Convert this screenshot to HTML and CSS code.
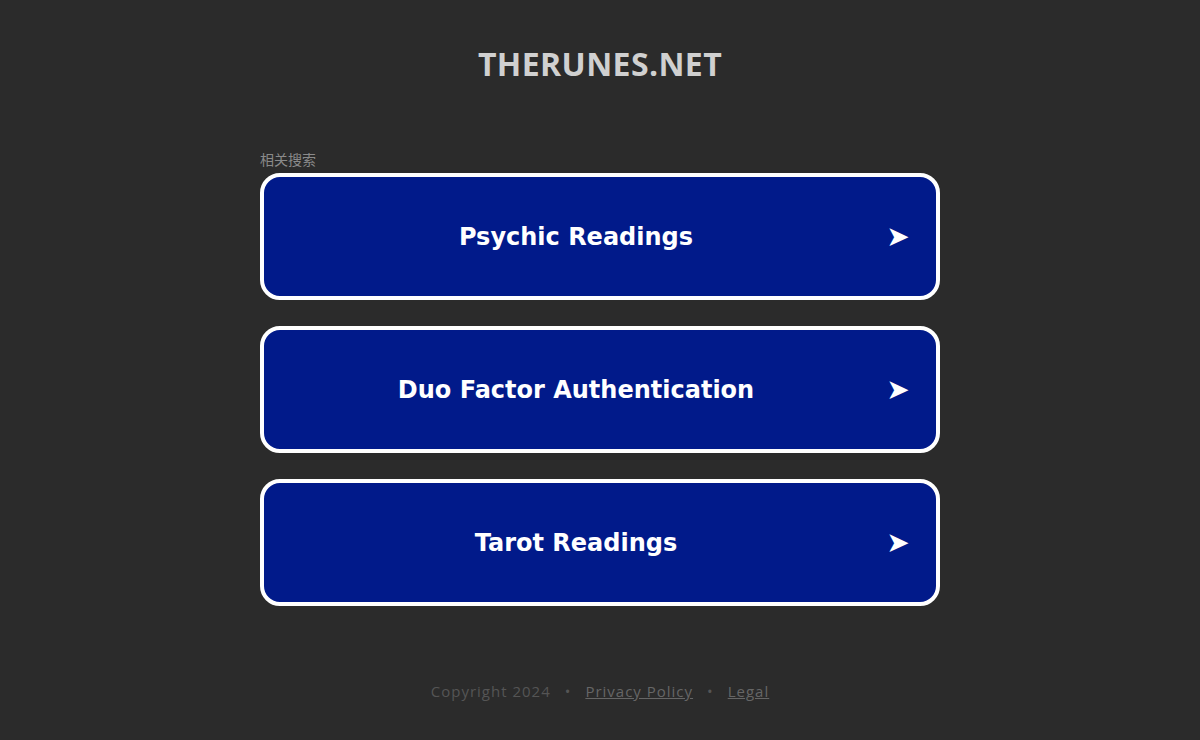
FILE: index.html
```html
<!DOCTYPE html>
<html lang="zh">
<head>
    <meta charset="UTF-8">
    <meta name="viewport" content="width=device-width, initial-scale=1.0">
    <title>therunes.net</title>
    <link rel="stylesheet" href="styles.css">
</head>
<body>
    <div class="page">
        <h1 class="domain">THERUNES.NET</h1>
        <div class="related">
            <div class="related-title">相关搜索</div>
            <a class="link-box" href="#">
                <span class="link-text">Psychic Readings</span>
                <span class="link-arrow">➤</span>
            </a>
            <a class="link-box" href="#">
                <span class="link-text">Duo Factor Authentication</span>
                <span class="link-arrow">➤</span>
            </a>
            <a class="link-box" href="#">
                <span class="link-text">Tarot Readings</span>
                <span class="link-arrow">➤</span>
            </a>
        </div>
        <div class="footer">
            <span>Copyright 2024</span>
            <span class="dot">•</span>
            <a href="#">Privacy Policy</a>
            <span class="dot">•</span>
            <a href="#">Legal</a>
        </div>
    </div>
</body>
</html>
```

FILE: styles.css
```css
body {
    margin: 0;
    background: #2b2b2b;
    font-family: 'Open Sans', 'Noto Sans CJK SC', sans-serif;
}
.page {
    display: flex;
    flex-direction: column;
    align-items: center;
    height: 740px;
}
.domain {
    margin: 44px 0 0;
    font-size: 32px;
    font-weight: 700;
    color: #d0d0d0;
    letter-spacing: 0.4px;
    line-height: 40px;
}
.related {
    width: 680px;
    margin-top: 66px;
    display: flex;
    flex-direction: column;
}
.related-title {
    font-size: 14px;
    color: #8a8a8a;
    line-height: 18px;
    margin-bottom: 5px;
    font-family: 'Noto Sans CJK SC', sans-serif;
}
.link-box {
    display: flex;
    align-items: center;
    height: 119px;
    margin-bottom: 26px;
    background: #011a8a;
    border: 4px solid #fff;
    border-radius: 20px;
    text-decoration: none;
    color: #fff;
}
.link-text {
    flex: 1;
    text-align: center;
    padding-left: 20px;
    font-family: 'DejaVu Sans', Verdana, sans-serif;
    font-weight: 700;
    font-size: 24px;
}
.link-arrow {
    width: 60px;
    padding-right: 8px;
    text-align: center;
    font-family: 'DejaVu Sans', sans-serif;
    font-size: 28px;
    line-height: 30px;
}
.footer {
    margin-top: 49px;
    font-size: 15px;
    color: #555;
    letter-spacing: 1px;
    display: flex;
    gap: 14px;
}
.footer a {
    color: #666;
    text-decoration: underline;
}
.footer .dot {
    color: #555;
}
```
